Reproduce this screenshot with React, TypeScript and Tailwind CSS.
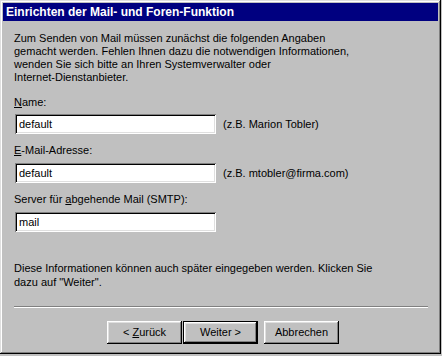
const raised =
  'shadow-[inset_-1px_-1px_#000000,inset_1px_1px_#ffffff,inset_-2px_-2px_#808080,inset_2px_2px_#dfdfdf]';
const sunken =
  'shadow-[inset_1px_1px_#808080,inset_-1px_-1px_#ffffff,inset_2px_2px_#000000,inset_-2px_-2px_#dfdfdf]';

function Field({ value, hint }: { value: string; hint?: string }) {
  return (
    <div className="flex items-center h-[20px]">
      <div className={`ml-px w-[201px] h-[20px] bg-white ${sunken} flex items-center pl-[4px]`}>
        {value}
      </div>
      {hint && <span className="ml-[7px]">{hint}</span>}
    </div>
  );
}

function Button({ children, isDefault }: { children: React.ReactNode; isDefault?: boolean }) {
  return (
    <div
      className={`w-[75px] h-[23px] flex items-center justify-center ${
        isDefault ? 'border border-black' : ''
      }`}
    >
      <div className={`w-full h-full flex items-center justify-center ${raised}`}>{children}</div>
    </div>
  );
}

export default function App() {
  return (
    <div
      className="w-[442px] h-[356px] bg-[#c0c0c0] text-black text-[11px] leading-[13px]"
      style={{ fontFamily: '"Liberation Sans", Arial, sans-serif' }}
    >
      <div
        className={`w-[441px] h-[354px] p-[3px] flex flex-col shadow-[inset_-1px_-1px_#000000,inset_1px_1px_#dfdfdf,inset_-2px_-2px_#808080,inset_2px_2px_#ffffff]`}
      >
        {/* Title bar */}
        <div className="h-[18px] bg-[#000080] text-white font-bold text-[12px] flex items-center pl-[3px]">
          Einrichten der Mail- und Foren-Funktion
        </div>

        <div className="flex flex-col pl-[11px] pr-[10px]">
          <p className="mt-[11px]">
            Zum Senden von Mail müssen zunächst die folgenden Angaben
            <br />
            gemacht werden. Fehlen Ihnen dazu die notwendigen Informationen,
            <br />
            wenden Sie sich bitte an Ihren Systemverwalter oder
            <br />
            Internet-Dienstanbieter.
          </p>

          <div className="mt-[12px]">
            <span className="underline">N</span>ame:
          </div>
          <div className="mt-[5px]">
            <Field value="default" hint="(z.B. Marion Tobler)" />
          </div>

          <div className="mt-[10px]">
            <span className="underline">E</span>-Mail-Adresse:
          </div>
          <div className="mt-[6px]">
            <Field value="default" hint="(z.B. mtobler@firma.com)" />
          </div>

          <div className="mt-[10px]">
            Server für <span className="underline">a</span>bgehende Mail (SMTP):
          </div>
          <div className="mt-[6px]">
            <Field value="mail" />
          </div>

          <p className="mt-[29px] leading-[14px]">
            Diese Informationen können auch später eingegeben werden. Klicken Sie
            <br />
            dazu auf "Weiter".
          </p>

          {/* Separator */}
          <div className="mt-[17px] h-[2px] w-[414px] border-t border-t-[#808080] border-b border-b-white" />

          <div className="mt-[13px] flex pl-[93px]">
            <Button>
              &lt; <span className="underline ml-[3px]">Z</span>urück
            </Button>
            <div className="ml-[1px]">
              <Button isDefault>Weiter &gt;</Button>
            </div>
            <div className="ml-[6px]">
              <Button>Abbrechen</Button>
            </div>
          </div>
        </div>
      </div>
    </div>
  );
}
